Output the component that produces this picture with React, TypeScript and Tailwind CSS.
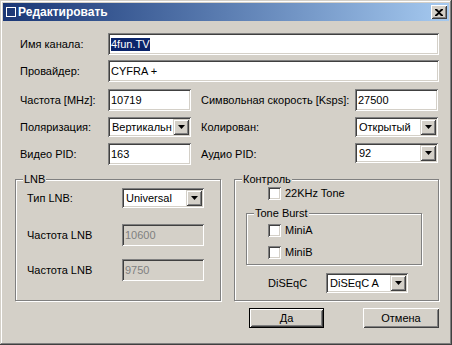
import React from 'react';

// classic win9x bevels
const sunken =
  'shadow-[inset_1px_1px_0_#808080,inset_-1px_-1px_0_#ffffff,inset_2px_2px_0_#404040,inset_-2px_-2px_0_#d4d0c8]';
const raised =
  'shadow-[inset_1px_1px_0_#d4d0c8,inset_-1px_-1px_0_#404040,inset_2px_2px_0_#ffffff,inset_-2px_-2px_0_#808080]';
const button =
  'shadow-[inset_1px_1px_0_#ffffff,inset_-1px_-1px_0_#404040,inset_2px_2px_0_#d4d0c8,inset_-2px_-2px_0_#808080]';
const defButton =
  'shadow-[inset_1px_1px_0_#000000,inset_-1px_-1px_0_#000000,inset_2px_2px_0_#ffffff,inset_-2px_-2px_0_#404040,inset_3px_3px_0_#d4d0c8,inset_-3px_-3px_0_#808080]';

function Edit({ value, className = '', disabled = false, selected = false }: { value: string; className?: string; disabled?: boolean; selected?: boolean }) {
  return (
    <div className={`flex items-center px-[3px] ${disabled ? 'bg-[#d4d0c8] text-[#808080]' : 'bg-white'} ${sunken} ${className}`}>
      {selected ? (
        <span className="bg-[#0a246a] text-white leading-[13px]">{value}</span>
      ) : (
        <span className="leading-[13px]">{value}</span>
      )}
    </div>
  );
}

function Combo({ value, className = '' }: { value: string; className?: string }) {
  return (
    <div className={`flex items-stretch bg-white p-[2px] ${sunken} ${className}`}>
      <span className="flex-1 flex items-center pl-[2px] overflow-hidden whitespace-nowrap">{value}</span>
      <div className={`w-[16px] bg-[#d4d0c8] flex items-center justify-center ${raised}`}>
        <svg width="7" height="4" viewBox="0 0 7 4">
          <path d="M0 0h7L3.5 4z" fill="#000" />
        </svg>
      </div>
    </div>
  );
}

function Check({ label }: { label: string }) {
  return (
    <div className="flex items-center gap-[4px] h-[13px]">
      <div className={`w-[13px] h-[13px] bg-white ${sunken}`} />
      <span>{label}</span>
    </div>
  );
}

function Group({ title, className = '', children }: { title: string; className?: string; children: React.ReactNode }) {
  return (
    <div className={`relative border border-[#808080] shadow-[1px_1px_0_#ffffff,inset_1px_1px_0_#ffffff] ${className}`}>
      <span className="absolute -top-[8px] left-[7px] bg-[#d4d0c8] px-[1px] leading-[14px]">{title}</span>
      {children}
    </div>
  );
}

export default function App() {
  return (
    <div className="w-[452px] h-[345px] bg-[#d4d0c8] p-[3px] text-[11px] text-black font-['Liberation_Sans',Arial,sans-serif] shadow-[inset_-1px_-1px_0_#404040,inset_1px_1px_0_#d4d0c8,inset_-2px_-2px_0_#808080,inset_2px_2px_0_#ffffff]">
      {/* title bar */}
      <div className="h-[18px] flex items-center justify-between pl-[3px] pr-[2px] bg-gradient-to-r from-[#1a3675] to-[#a6caf0]">
        <div className="flex items-center gap-[2px]">
          <div className="w-[10px] h-[10px] border-[1.5px] border-white" />
          <span className="text-white font-bold text-[12px] leading-none">Редактировать</span>
        </div>
        <div className={`w-[16px] h-[14px] bg-[#d4d0c8] flex items-center justify-center ${button}`}>
          <svg width="8" height="7" viewBox="0 0 8 7">
            <path d="M0 0h2l2 2 2-2h2v1L5 3.5 8 6v1H6L4 5 2 7H0V6l3-2.5L0 1z" fill="#000" />
          </svg>
        </div>
      </div>

      <div className="flex flex-col pl-[12px] pr-[10px]">
        <div className="flex items-center pl-[5px] mt-[12px] h-[22px]">
          <span className="w-[88px]">Имя канала:</span>
          <Edit value="4fun.TV" selected className="w-[331px] h-[22px]" />
        </div>
        <div className="flex items-center pl-[5px] mt-[5px] h-[22px]">
          <span className="w-[88px]">Провайдер:</span>
          <Edit value="CYFRA +" className="w-[331px] h-[22px]" />
        </div>
        <div className="flex items-center pl-[5px] mt-[7px] h-[22px]">
          <span className="w-[88px]">Частота [MHz]:</span>
          <Edit value="10719" className="w-[83px] h-[22px]" />
          <span className="w-[154px] ml-[10px]">Символьная скорость [Ksps]:</span>
          <Edit value="27500" className="w-[83px] h-[22px]" />
        </div>
        <div className="flex items-center pl-[5px] mt-[6px] h-[20px]">
          <span className="w-[88px]">Поляризация:</span>
          <Combo value="Вертикальн" className="w-[83px] h-[20px]" />
          <span className="w-[154px] ml-[10px]">Колирован:</span>
          <Combo value="Открытый" className="w-[83px] h-[20px]" />
        </div>
        <div className="flex items-start pl-[5px] mt-[6px] h-[22px]">
          <span className="w-[88px] self-center">Видео PID:</span>
          <Edit value="163" className="w-[83px] h-[22px]" />
          <span className="w-[154px] ml-[10px] self-center">Аудио PID:</span>
          <Combo value="92" className="w-[83px] h-[20px]" />
        </div>

        <div className="flex mt-[14px]">
          <Group title="LNB" className="w-[206px] h-[122px] flex flex-col pl-[11px]">
            <div className="flex items-center mt-[8px] h-[20px]">
              <span className="w-[95px]">Тип LNB:</span>
              <Combo value="Universal" className="w-[82px] h-[20px]" />
            </div>
            <div className="flex items-center mt-[16px] h-[22px]">
              <span className="w-[95px]">Частота LNB</span>
              <Edit value="10600" disabled className="w-[82px] h-[22px]" />
            </div>
            <div className="flex items-center mt-[13px] h-[22px]">
              <span className="w-[95px]">Частота LNB</span>
              <Edit value="9750" disabled className="w-[82px] h-[22px]" />
            </div>
          </Group>

          <Group title="Контроль" className="w-[205px] h-[122px] ml-[13px] flex flex-col">
            <div className="pl-[33px] mt-[7px]">
              <Check label="22KHz Tone" />
            </div>
            <Group title="Tone Burst" className="w-[176px] h-[52px] ml-[11px] mt-[13px] flex flex-col pl-[21px]">
              <div className="mt-[10px]">
                <Check label="MiniA" />
              </div>
              <div className="mt-[9px]">
                <Check label="MiniB" />
              </div>
            </Group>
            <div className="flex items-center pl-[33px] mt-[8px] h-[20px]">
              <span className="w-[58px]">DiSEqC</span>
              <Combo value="DiSEqC A" className="w-[82px] h-[20px]" />
            </div>
          </Group>
        </div>

        <div className="flex justify-end gap-[39px] mt-[7px]">
          <div className={`w-[75px] h-[20px] flex items-center justify-center ${defButton}`}>Да</div>
          <div className={`w-[76px] h-[20px] flex items-center justify-center ${button}`}>Отмена</div>
        </div>
      </div>
    </div>
  );
}
